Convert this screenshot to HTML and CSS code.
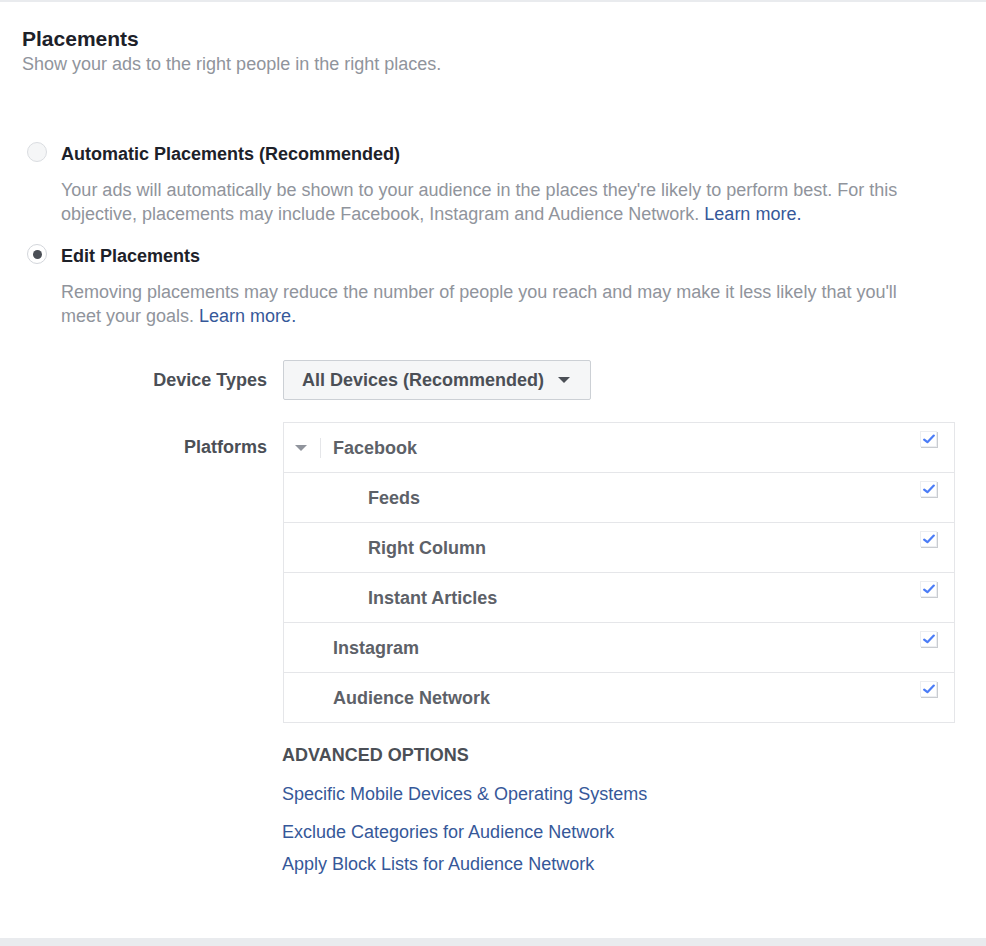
FILE: index.html
```html
<!DOCTYPE html>
<html lang="en">
<head>
<meta charset="utf-8">
<title>Placements</title>
<link rel="stylesheet" href="styles.css">
</head>
<body>
<div class="top-border"></div>
<section class="panel">
  <h2 class="title">Placements</h2>
  <p class="subtitle">Show your ads to the right people in the right places.</p>

  <div class="options">
    <div class="option">
      <span class="radio"></span>
      <div class="option-body">
        <div class="option-label">Automatic Placements (Recommended)</div>
        <p class="option-desc">Your ads will automatically be shown to your audience in the places they're likely to perform best. For this objective, placements may include Facebook, Instagram and Audience Network. <a class="link" href="#">Learn more.</a></p>
      </div>
    </div>
    <div class="option option-second">
      <span class="radio radio-checked"><span class="radio-dot"></span></span>
      <div class="option-body">
        <div class="option-label">Edit Placements</div>
        <p class="option-desc option-desc-second">Removing placements may reduce the number of people you reach and may make it less likely that you'll meet your goals. <a class="link" href="#">Learn more.</a></p>
      </div>
    </div>
  </div>

  <div class="form">
    <div class="form-label form-label-device">Device Types</div>
    <div class="form-field">
      <div class="dropdown">
        <span class="dropdown-text">All Devices (Recommended)</span>
        <span class="caret caret-dark"></span>
      </div>
    </div>

    <div class="form-label form-label-platforms">Platforms</div>
    <div class="form-field">
      <div class="platforms">
        <div class="prow">
          <span class="caret caret-grey"></span>
          <span class="prow-sep"></span>
          <span class="prow-text">Facebook</span>
          <span class="check"><svg viewBox="0 0 12 10" width="12" height="10"><path d="M1.2 5.6 L4.4 8.2 L10.8 1.6" fill="none" stroke="#4a7cf7" stroke-width="2.2" stroke-linecap="round" stroke-linejoin="round"/></svg></span>
        </div>
        <div class="prow prow-child">
          <span class="prow-text">Feeds</span>
          <span class="check"><svg viewBox="0 0 12 10" width="12" height="10"><path d="M1.2 5.6 L4.4 8.2 L10.8 1.6" fill="none" stroke="#4a7cf7" stroke-width="2.2" stroke-linecap="round" stroke-linejoin="round"/></svg></span>
        </div>
        <div class="prow prow-child">
          <span class="prow-text">Right Column</span>
          <span class="check"><svg viewBox="0 0 12 10" width="12" height="10"><path d="M1.2 5.6 L4.4 8.2 L10.8 1.6" fill="none" stroke="#4a7cf7" stroke-width="2.2" stroke-linecap="round" stroke-linejoin="round"/></svg></span>
        </div>
        <div class="prow prow-child">
          <span class="prow-text">Instant Articles</span>
          <span class="check"><svg viewBox="0 0 12 10" width="12" height="10"><path d="M1.2 5.6 L4.4 8.2 L10.8 1.6" fill="none" stroke="#4a7cf7" stroke-width="2.2" stroke-linecap="round" stroke-linejoin="round"/></svg></span>
        </div>
        <div class="prow prow-top">
          <span class="prow-text">Instagram</span>
          <span class="check"><svg viewBox="0 0 12 10" width="12" height="10"><path d="M1.2 5.6 L4.4 8.2 L10.8 1.6" fill="none" stroke="#4a7cf7" stroke-width="2.2" stroke-linecap="round" stroke-linejoin="round"/></svg></span>
        </div>
        <div class="prow prow-top">
          <span class="prow-text">Audience Network</span>
          <span class="check"><svg viewBox="0 0 12 10" width="12" height="10"><path d="M1.2 5.6 L4.4 8.2 L10.8 1.6" fill="none" stroke="#4a7cf7" stroke-width="2.2" stroke-linecap="round" stroke-linejoin="round"/></svg></span>
        </div>
      </div>

      <div class="advanced">
        <div class="advanced-title">ADVANCED OPTIONS</div>
        <a class="link adv-link adv-link-first" href="#">Specific Mobile Devices &amp; Operating Systems</a>
        <a class="link adv-link adv-link-second" href="#">Exclude Categories for Audience Network</a>
        <a class="link adv-link adv-link-third" href="#">Apply Block Lists for Audience Network</a>
      </div>
    </div>
  </div>
</section>
<div class="bottom-bar"></div>
</body>
</html>
```

FILE: styles.css
```css
* { box-sizing: border-box; }

html, body {
  margin: 0;
  padding: 0;
  background: #ffffff;
}

body {
  font-family: "Liberation Sans", Arial, Helvetica, sans-serif;
  font-size: 18px;
  line-height: 24px;
  color: #1d2129;
  min-height: 946px;
  display: flex;
  flex-direction: column;
}

.top-border {
  height: 2px;
  background: #e9ebee;
}

.panel {
  flex: 1;
  padding: 26px 0 0 22px;
}

.title {
  margin: 0;
  font-size: 21px;
  line-height: 22px;
  font-weight: bold;
  color: #1d2129;
}

.subtitle {
  margin: 2px 0 0 0;
  line-height: 24px;
  color: #90949c;
}

.options {
  margin-top: 66px;
  padding-left: 5px;
}

.option {
  display: flex;
  align-items: flex-start;
  gap: 14px;
}

.option-second {
  margin-top: 18px;
}

.radio {
  width: 20px;
  height: 20px;
  flex: none;
  border-radius: 50%;
  border: 1px solid #dadde1;
  background: #f5f6f7;
  display: flex;
  align-items: center;
  justify-content: center;
}

.radio-checked {
  background: #ffffff;
  border-color: #d3d6db;
}

.radio-dot {
  width: 9px;
  height: 9px;
  border-radius: 50%;
  background: #4b4f56;
}

.option-body {
  flex: 1;
}

.option-label {
  font-weight: bold;
  color: #1d2129;
}

.option-desc {
  margin: 12px 0 0 0;
  max-width: 870px;
  color: #90949c;
}

.option-desc-second {
  margin-top: 12px;
}

.link {
  color: #365899;
  text-decoration: none;
}

.form {
  margin-top: 32px;
  display: grid;
  grid-template-columns: 245px 672px;
  column-gap: 16px;
  row-gap: 22px;
}

.form-label {
  text-align: right;
  font-weight: bold;
  color: #4b4f56;
}

.form-label-device {
  align-self: center;
}

.form-label-platforms {
  padding-top: 13px;
}

.dropdown {
  width: 308px;
  height: 40px;
  border: 1px solid #ccd0d5;
  border-radius: 2px;
  background: #f5f6f7;
  display: flex;
  align-items: center;
  padding: 0 20px 0 18px;
  justify-content: space-between;
}

.dropdown-text {
  font-weight: bold;
  color: #4b4f56;
}

.caret {
  width: 0;
  height: 0;
  border-left: 6px solid transparent;
  border-right: 6px solid transparent;
  border-top: 6px solid #4b4f56;
}

.caret-grey {
  border-top-color: #90949c;
}

.platforms {
  border: 1px solid #e5e6e9;
  border-bottom: none;
}

.prow {
  height: 50px;
  border-bottom: 1px solid #e5e6e9;
  display: flex;
  align-items: center;
  padding: 0 17px 0 11px;
}

.prow-child {
  padding-left: 84px;
}

.prow-top {
  padding-left: 49px;
}

.prow-sep {
  width: 1px;
  height: 20px;
  background: #e5e6e9;
  margin: 0 12px 0 13px;
}

.prow-text {
  flex: 1;
  font-weight: bold;
  color: #5d6168;
}

.check {
  align-self: flex-start;
  margin-top: 8px;
  width: 17px;
  height: 16px;
  background: #ffffff;
  border: 1px solid #eceef1;
  box-shadow: 1px 1px 0 #c9ccd1;
  display: flex;
  align-items: center;
  justify-content: center;
}

.advanced {
  margin-top: 20px;
  display: flex;
  flex-direction: column;
  align-items: flex-start;
  margin-left: -1px;
}

.advanced-title {
  font-weight: bold;
  color: #4b4f56;
}

.adv-link-first {
  margin-top: 15px;
}

.adv-link-second {
  margin-top: 14px;
}

.adv-link-third {
  margin-top: 8px;
}

.bottom-bar {
  height: 8px;
  background: #e9ebee;
}
```
